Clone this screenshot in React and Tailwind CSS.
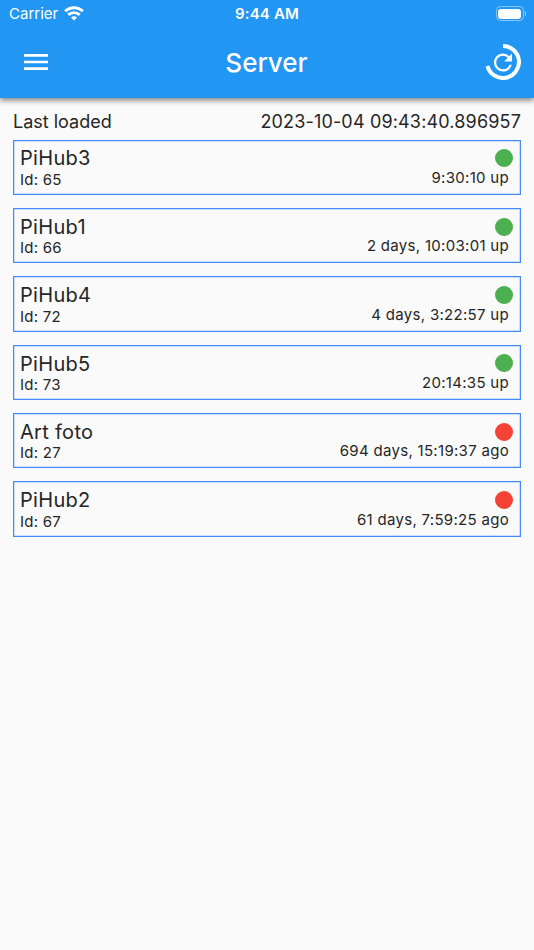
import { MdMenu, MdRefresh } from 'react-icons/md';

const servers = [
  { id: 65, name: 'PiHub3', status: '9:30:10 up', online: true },
  { id: 66, name: 'PiHub1', status: '2 days, 10:03:01 up', online: true },
  { id: 72, name: 'PiHub4', status: '4 days, 3:22:57 up', online: true },
  { id: 73, name: 'PiHub5', status: '20:14:35 up', online: true },
  { id: 27, name: 'Art foto', status: '694 days, 15:19:37 ago', online: false },
  { id: 67, name: 'PiHub2', status: '61 days, 7:59:25 ago', online: false }
];

function WifiIcon() {
  return (
    <svg width="20" height="15" viewBox="0 0 20 15" fill="none" stroke="white" strokeWidth="2.9">
      <path d="M1.2 5.3a12.6 12.6 0 0 1 17.6 0" />
      <path d="M4.3 8.9a8.2 8.2 0 0 1 11.4 0" />
      <path d="M10 14.6 7 11.6a4.3 4.3 0 0 1 6 0Z" fill="white" stroke="none" />
    </svg>
  );
}

function StatusBar() {
  return (
    <div className="grid h-[27px] grid-cols-3 items-center px-[8px] text-[15px]">
      <div className="ml-px flex items-center gap-[6px]">
        <span className="mt-0.5">Carrier</span>
        <WifiIcon />
      </div>
      <span className="mt-0.5 text-center font-semibold tracking-[0.15px]">9:44 AM</span>
      <div className="flex items-center justify-end gap-px">
        <div className="h-[15px] w-[28px] rounded-[4.5px] border border-white/45 p-[1.5px]">
          <div className="h-full rounded-[3px] bg-white" />
        </div>
        <div className="h-[5px] w-[1.5px] rounded-r bg-white/50" />
      </div>
    </div>
  );
}

// Reload button with the countdown ring around it
function ReloadButton() {
  return (
    <div className="relative flex size-9 items-center justify-center">
      <svg className="absolute inset-0" width="36" height="36" viewBox="0 0 36 36" fill="none">
        <path d="M18 2A16 16 0 1 1 2.5 21.9" stroke="white" strokeWidth="4" />
      </svg>
      <MdRefresh size={27} className="-translate-x-[0.5px]" />
    </div>
  );
}

function ServerCard({ server }) {
  return (
    <div className="flex h-[55.35px] justify-between border border-[#448aff] pl-[6px] pr-[7px] shadow-[inset_0_0_0_0.5px_#448aff80]">
      <div className="flex flex-col">
        <span className="mt-[4.9px] text-[20px] leading-[27px] tracking-[0.3px]">{server.name}</span>
        <span className="-mt-[0.5px] text-[15px] leading-[15px] tracking-[0.25px]">
          Id: {server.id}
        </span>
      </div>
      <div className="flex flex-col items-end">
        <div
          className={`mt-[8.8px] size-[18px] rounded-full ${server.online ? 'bg-[#4caf50]' : 'bg-[#f44336]'}`}
        />
        <span className="-mt-[0.4px] mr-1 text-[15px] leading-[21px] tracking-[0.3px]">
          {server.status}
        </span>
      </div>
    </div>
  );
}

export default function App() {
  return (
    <div className="min-h-screen bg-[#fafafa] font-[Inter,sans-serif] text-[#262626]">
      <header className="h-[98px] bg-[#2196f3] text-white shadow-[0_2px_5px_rgba(0,0,0,0.35),0_4px_6px_rgba(0,0,0,0.14)]">
        <StatusBar />
        <div className="grid h-[70px] grid-cols-[1fr_auto_1fr] items-center pl-[20px] pr-[13px]">
          <MdMenu size={32} />
          <h1 className="-translate-x-[4px] text-[26px] font-medium">Server</h1>
          <div className="flex justify-end">
            <ReloadButton />
          </div>
        </div>
      </header>
      <main className="px-[13px] pt-[13px]">
        <div className="flex justify-between text-[18px] leading-[22px]">
          <span>Last loaded</span>
          <span className="tracking-[0.16px]">2023-10-04 09:43:40.896957</span>
        </div>
        <div className="mt-[6.6px] flex flex-col gap-[13px]">
          {servers.map((server) => (
            <ServerCard key={server.id} server={server} />
          ))}
        </div>
      </main>
    </div>
  );
}
